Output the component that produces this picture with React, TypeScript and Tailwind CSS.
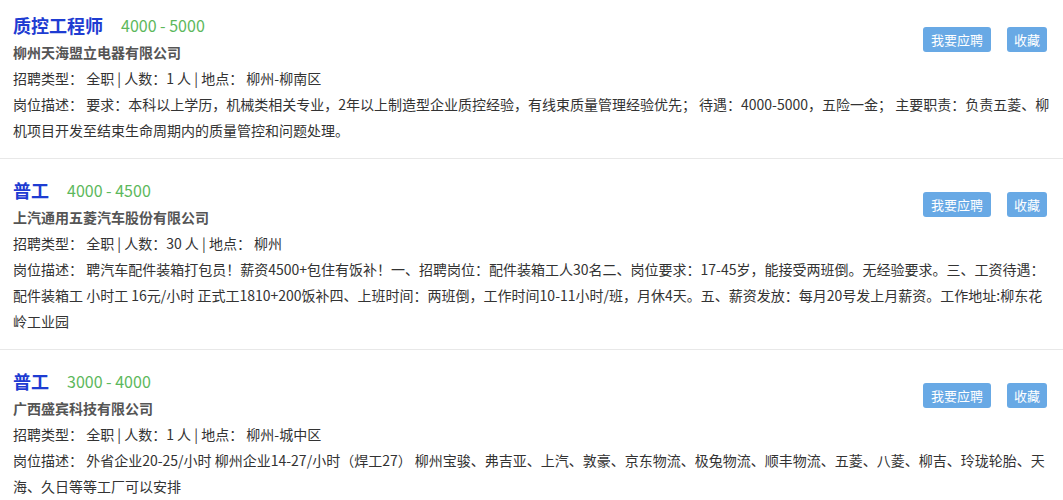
import React from "react";

type Job = {
  title: string;
  salary: string;
  company: string;
  count: string;
  place: string;
  desc: string;
};

const jobs: Job[] = [
  {
    title: "质控工程师",
    salary: "4000 - 5000",
    company: "柳州天海盟立电器有限公司",
    count: "1",
    place: "柳州-柳南区",
    desc: "要求：本科以上学历，机械类相关专业，2年以上制造型企业质控经验，有线束质量管理经验优先； 待遇：4000-5000，五险一金； 主要职责：负责五菱、柳机项目开发至结束生命周期内的质量管控和问题处理。",
  },
  {
    title: "普工",
    salary: "4000 - 4500",
    company: "上汽通用五菱汽车股份有限公司",
    count: "30",
    place: "柳州",
    desc: "聘汽车配件装箱打包员！薪资4500+包住有饭补！一、招聘岗位：配件装箱工人30名二、岗位要求：17-45岁，能接受两班倒。无经验要求。三、工资待遇：配件装箱工 小时工 16元/小时 正式工1810+200饭补四、上班时间：两班倒，工作时间10-11小时/班，月休4天。五、薪资发放：每月20号发上月薪资。工作地址:柳东花岭工业园",
  },
  {
    title: "普工",
    salary: "3000 - 4000",
    company: "广西盛宾科技有限公司",
    count: "1",
    place: "柳州-城中区",
    desc: "外省企业20-25/小时 柳州企业14-27/小时（焊工27） 柳州宝骏、弗吉亚、上汽、敦豪、京东物流、极兔物流、顺丰物流、五菱、八菱、柳吉、玲珑轮胎、天海、久日等等工厂可以安排",
  },
];

function Card({ job, first }: { job: Job; first: boolean }) {
  return (
    <div
      className={
        (first ? "pt-[11px] " : "pt-[17px] ") +
        "pb-[15px] pl-[13px] pr-[13px] border-b border-[#e8e8e8]"
      }
    >
      <div className="float-right mt-[16px] mr-[3px] ml-4 flex gap-[16px]">
        <button className="h-[25px] px-[8px] rounded-[3px] bg-[#68a9e5] text-white text-[13px] leading-[25px]">
          我要应聘
        </button>
        <button className="h-[25px] px-[7px] rounded-[3px] bg-[#68a9e5] text-white text-[13px] leading-[25px]">
          收藏
        </button>
      </div>
      <div className="h-[28px] flex items-center">
        <span className="text-[18px] font-bold text-[#1e3cd2] leading-[28px]">
          {job.title}
        </span>
        <span className="ml-[18px] text-[16px] text-[#5cb85c] leading-[28px]">
          {job.salary}
        </span>
      </div>
      <div className="text-[14px] font-bold text-[#555555] leading-[26px]">
        {job.company}
      </div>
      <div className="text-[14px] text-[#333333] leading-[26px]">
        招聘类型： 全职 | 人数：{job.count} 人 | 地点： {job.place}
      </div>
      <div className="text-[14px] text-[#333333] leading-[26px]">
        <span>岗位描述：</span> <span>{job.desc}</span>
      </div>
    </div>
  );
}

export default function App() {
  return (
    <div
      className="w-[1063px] bg-white"
      style={{ fontFamily: '"Noto Sans CJK SC", "Noto Sans", sans-serif' }}
    >
      {jobs.map((j, i) => (
        <Card key={i} job={j} first={i === 0} />
      ))}
    </div>
  );
}
